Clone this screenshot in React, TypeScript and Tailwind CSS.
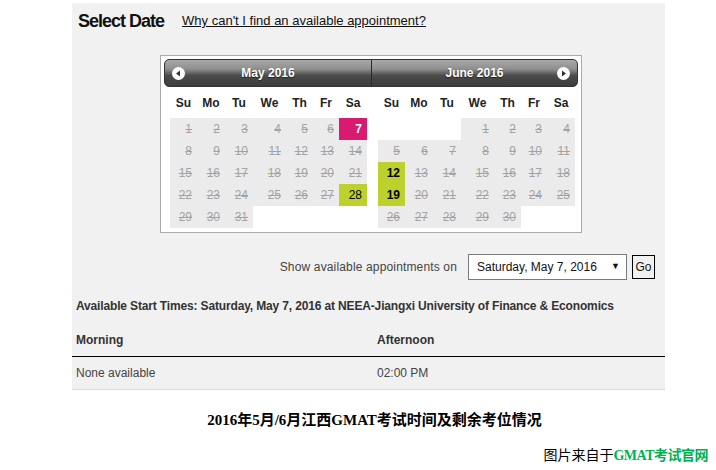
import React from 'react';

type Day = { n: number; state: 'off' | 'pink' | 'lime' } | null;

const cols = ['w-[27px]', 'w-[28px]', 'w-[28px]', 'w-[33px]', 'w-[27px]', 'w-[26px]', 'w-[28px]'];
const names = ['Su', 'Mo', 'Tu', 'We', 'Th', 'Fr', 'Sa'];

function buildMonth(offset: number, total: number, special: Record<number, 'pink' | 'lime'>): Day[][] {
  const cells: Day[] = [];
  for (let i = 0; i < offset; i++) cells.push(null);
  for (let d = 1; d <= total; d++) cells.push({ n: d, state: special[d] ?? 'off' });
  while (cells.length % 7) cells.push(null);
  const rows: Day[][] = [];
  for (let i = 0; i < cells.length; i += 7) rows.push(cells.slice(i, i + 7));
  return rows;
}

const may = buildMonth(0, 31, { 7: 'pink', 28: 'lime' });
const june = buildMonth(3, 30, { 12: 'lime', 19: 'lime' });

function Cell({ day, col }: { day: Day; col: number }) {
  const w = cols[col];
  if (!day) return <div className={`${w} h-[22px]`} />;
  if (day.state === 'pink')
    return (
      <div className={`${w} h-[22px] bg-[#d81b70] text-white font-bold text-right pr-[5px] leading-[22px]`}>{day.n}</div>
    );
  if (day.state === 'lime')
    return (
      <div
        className={`${w} h-[22px] bg-[#bcd12b] text-black text-right pr-[5px] leading-[22px] ${day.n === 28 ? '' : 'font-bold'}`}
      >
        {day.n}
      </div>
    );
  return (
    <div className={`${w} h-[22px] bg-[#ebebeb] text-[#a3a3a3] line-through text-right pr-[5px] leading-[22px]`}>
      {day.n}
    </div>
  );
}

function Month({ rows, pad }: { rows: Day[][]; pad: string }) {
  return (
    <div className={`w-[207px] ${pad}`}>
      <div className="flex mt-[5px] h-[22px] items-center font-bold text-[12px] text-[#222]">
        {names.map((n, i) => (
          <div key={n} className={`${cols[i]} text-center`}>
            {n}
          </div>
        ))}
      </div>
      <div className="mt-[4px] text-[12px]">
        {rows.map((r, ri) => (
          <div key={ri} className="flex">
            {r.map((d, ci) => (
              <Cell key={ci} day={d} col={ci} />
            ))}
          </div>
        ))}
      </div>
    </div>
  );
}

function Arrow({ dir }: { dir: 'l' | 'r' }) {
  return (
    <svg width="13" height="13" viewBox="0 0 13 13">
      <circle cx="6.5" cy="6.5" r="6.5" fill="#fff" />
      {dir === 'l' ? <path d="M4 6.5 L8 3.5 L8 9.5 Z" fill="#333" /> : <path d="M9 6.5 L5 3.5 L5 9.5 Z" fill="#333" />}
    </svg>
  );
}

export default function App() {
  return (
    <div className="w-[716px] h-[470px] bg-white font-['Liberation_Sans',Arial,sans-serif] overflow-hidden">
      <div className="pt-[3px] pl-[72px]">
        <div className="w-[593px] bg-[#f1f1f1]">
          <div className="h-[36px] flex items-center pl-[6px]">
            <span className="font-bold text-[18px] text-[#111] tracking-[-1px]">Select Date</span>
            <a className="ml-[18px] text-[13px] text-[#111] underline">Why can't I find an available appointment?</a>
          </div>

          <div className="ml-[88px] mt-[16px] w-[422px] border border-[#aaa] bg-white px-[3px] pt-[3px] pb-[4px]">
            <div className="flex h-[28px] rounded-[5px] border border-[#333] bg-[linear-gradient(to_bottom,#a9a9a9_0%,#8e8e8e_35%,#4a4a4a_60%,#3d3d3d_100%)] text-white font-bold text-[12px] [text-shadow:0_1px_1px_#222]">
              <div className="w-[207px] flex items-center pl-[7px] border-r border-[#2a2a2a]">
                <Arrow dir="l" />
                <div className="flex-1 text-center pr-[20px]">May 2016</div>
              </div>
              <div className="flex-1 flex items-center pr-[7px]">
                <div className="flex-1 text-center pl-[20px]">June 2016</div>
                <Arrow dir="r" />
              </div>
            </div>
            <div className="flex">
              <Month rows={may} pad="pl-[6px]" />
              <Month rows={june} pad="pl-[7px]" />
            </div>
          </div>

          <div className="mt-[21px] flex items-center justify-end pr-[10px] text-[12px] text-[#444]">
            <span className="tracking-[0.15px]">Show available appointments on</span>
            <div className="ml-[11px] w-[159px] h-[26px] border border-[#7a7a7a] bg-white flex items-center pl-[8px] pr-[6px] text-[#111]">
              <span className="flex-1">Saturday, May 7, 2016</span>
              <span className="text-[9px]">▼</span>
            </div>
            <div className="ml-[5px] w-[23px] h-[24px] border border-black flex items-center justify-center text-[#111]">
              Go
            </div>
          </div>

          <div className="mt-[16px] h-[20px] leading-[20px] pl-[4px] text-[12px] font-bold text-[#333] tracking-[-0.15px]">
            Available Start Times: Saturday, May 7, 2016 at NEEA-Jiangxi University of Finance &amp; Economics
          </div>

          <div className="mt-[7px] text-[12px] text-[#333]">
            <div className="flex h-[34px] items-center border-b border-black font-bold">
              <div className="w-[301px] pl-[4px]">Morning</div>
              <div className="pl-[4px]">Afternoon</div>
            </div>
            <div className="flex h-[33px] items-center border-b border-[#dcdcdc] text-[#444]">
              <div className="w-[301px] pl-[4px]">None available</div>
              <div className="pl-[4px]">02:00 PM</div>
            </div>
          </div>
        </div>
      </div>

      <div className="mt-[20px] flex justify-center pl-[33px] h-[20px] leading-[20px] text-[15px] font-bold text-black font-['Liberation_Serif','Noto_Sans_CJK_SC',serif]">
        2016年5月/6月江西GMAT考试时间及剩余考位情况
      </div>

      <div className="mt-[16px] flex justify-end pr-[8px] h-[20px] leading-[20px] text-[14px] font-['Liberation_Serif','Noto_Sans_CJK_SC',serif]">
        <span className="text-black">图片来自于</span>
        <span className="text-[#00b050] font-bold tracking-[-0.5px]">GMAT考试官网</span>
      </div>
    </div>
  );
}
